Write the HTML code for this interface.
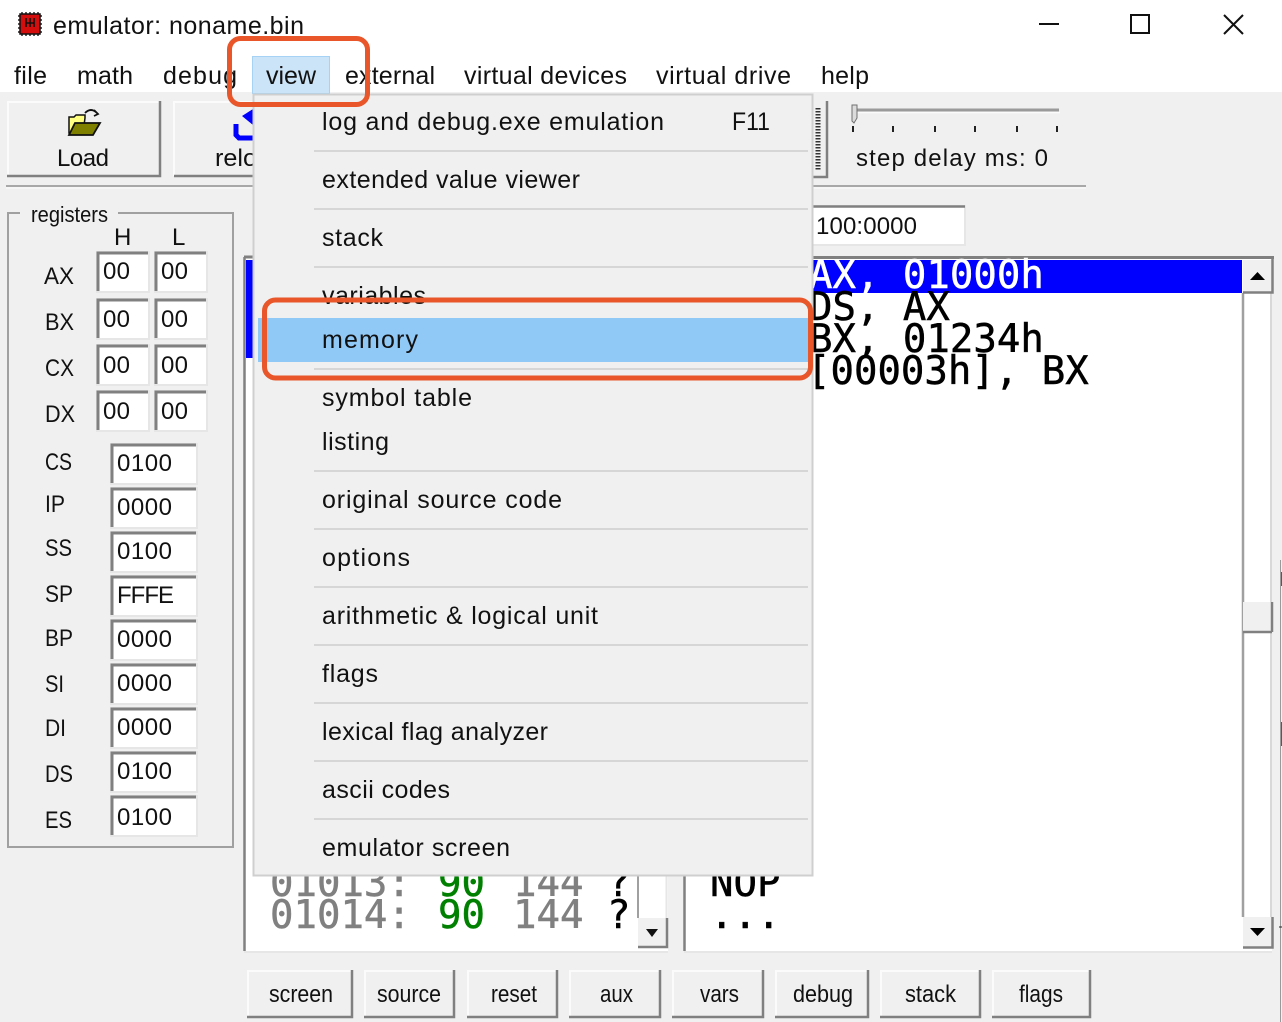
<!DOCTYPE html>
<html><head><meta charset="utf-8"><title>emulator: noname.bin</title>
<style>
html,body{margin:0;padding:0;background:#f0f0f0;width:1282px;height:1022px;overflow:hidden}
svg{display:block;position:absolute;left:0;top:0}
text{font-family:"Liberation Sans",sans-serif;fill:#111}
.m{font-size:25px}.s{font-size:24px}
.t{font-family:"DejaVu Sans Mono","Liberation Mono",monospace;font-size:39px;fill:#000;stroke:#000;stroke-width:.5}
.g{fill:#808080;stroke:#808080}.gr{fill:#008000;stroke:#008000}.w{fill:#fff;stroke:#fff}
.bt{fill:#f0f0f0}.hi{fill:none;stroke:#fbfbfb;stroke-width:2}.lo{fill:none;stroke:#808080;stroke-width:2.5}
.inp{fill:#fff;stroke:#e6e6e6;stroke-width:2}.ins{fill:none;stroke:#808080;stroke-width:3}
.sep{stroke:#d6d6d6;stroke-width:2}
</style></head><body>
<svg width="1282" height="1022" viewBox="0 0 1282 1022" xmlns="http://www.w3.org/2000/svg">
<rect width="1282" height="1022" fill="#f0f0f0"/>
<rect width="1282" height="92" fill="#fff"/>
<!-- title -->
<g>
<path d="M22 12v24M26 12v24M30 12v24M34 12v24M38 12v24M18 16h24M18 20h24M18 24h24M18 28h24M18 32h24" stroke="#222" stroke-width="1.5" stroke-dasharray="2 20"/>
<rect x="20" y="14" width="20" height="20" fill="#d40d0d" stroke="#111" stroke-width="1.5"/>
<path d="M26 18v9M30 18v9M34 18v9M26 23h8" stroke="#111" stroke-width="1.6" fill="none"/>
<text class="m" x="53" y="34" textLength="251" lengthAdjust="spacing">emulator: noname.bin</text>
<path d="M1039 24h20" stroke="#111" stroke-width="2"/>
<rect x="1131" y="15" width="18" height="18" fill="none" stroke="#111" stroke-width="2"/>
<path d="M1224 15l19 19M1243 15l-19 19" stroke="#111" stroke-width="2" fill="none"/>
</g>
<!-- menu bar -->
<rect x="252.500" y="56.500" width="77" height="37" fill="#cce4f7" stroke="#a6d3f5"/>
<g class="m">
<text class="m" x="14" y="84" textLength="33">file</text>
<text class="m" x="77" y="84" textLength="56">math</text>
<text class="m" x="163" y="84" textLength="74">debug</text>
<text class="m" x="266" y="84" textLength="50">view</text>
<text class="m" x="345" y="84" textLength="90">external</text>
<text class="m" x="464" y="84" textLength="163">virtual devices</text>
<text class="m" x="656" y="84" textLength="135">virtual drive</text>
<text class="m" x="821" y="84" textLength="48">help</text>
</g>
<!-- toolbar -->
<rect x="7" y="101" width="154" height="76" class="bt"/>
<path d="M8 176V102H160" class="hi"/><path d="M160 101V176H7" class="lo"/>
<g>
<path d="M69 133V117h5l2-2h9v3l-2 15z" fill="#ffff80" stroke="#111" stroke-width="1.5"/>
<path d="M69 135l6-12h25l-7 12z" fill="#808000" stroke="#111" stroke-width="1.8"/>
<path d="M85 113c4-4 8-4 12 0M94 110l4 4-4 2" fill="none" stroke="#111" stroke-width="1.8"/>
</g>
<text class="s" x="57" y="166" textLength="52">Load</text>
<rect x="173" y="101" width="150" height="76" class="bt"/>
<path d="M174 176V102H322" class="hi"/><path d="M174 176H322" class="lo"/>
<path d="M236 124v11l3 3h14" fill="none" stroke="#0000ff" stroke-width="5"/>
<path d="M242 116l11-7v16z" fill="#0000ff"/>
<text class="s" x="215" y="166" textLength="70" lengthAdjust="spacingAndGlyphs">reload</text>
<rect x="813" y="101" width="14" height="76" class="bt"/>
<path d="M818 108V170" stroke="#333" stroke-width="5" stroke-dasharray="1.500 1.500"/>
<path d="M827 101V177H813" class="lo"/>
<path d="M6 186H1086" stroke="#a8a8a8" stroke-width="2"/><path d="M6 188H1086" stroke="#fbfbfb" stroke-width="1"/>
<!-- slider -->
<path d="M855 110H1059" stroke="#9a9a9a" stroke-width="3"/><path d="M855 112.500H1060" stroke="#fbfbfb" stroke-width="1.500"/>
<path d="M852 105h5v13l-3 5-2-2z" fill="#dcdcdc" stroke="#707070" stroke-width="1"/>
<path d="M853 126v6M893 126v6M935 126v6M975 126v6M1017 126v6M1057 126v6" stroke="#222" stroke-width="2"/>
<text class="s" x="856" y="166" textLength="192">step delay ms: 0</text>
<!-- address -->
<rect x="700" y="206" width="265" height="39" class="inp"/>
<path d="M700 206.500H965" stroke="#808080" stroke-width="2.500"/>
<text class="s" x="816" y="234" textLength="101">100:0000</text>
<!-- registers group -->
<rect x="8" y="213" width="225" height="634" fill="none" stroke="#a0a0a0" stroke-width="2"/>
<rect x="20" y="205" width="98" height="16" fill="#f0f0f0"/>
<text x="31" y="222" textLength="77" lengthAdjust="spacingAndGlyphs" style="font-size:22px">registers</text>
<text class="s" x="114" y="245">H</text><text class="s" x="172" y="245">L</text>
<g class="s">
<text class="s" x="44" y="284" textLength="30" lengthAdjust="spacingAndGlyphs">AX</text>
<text class="s" x="45" y="330" textLength="29" lengthAdjust="spacingAndGlyphs">BX</text>
<text class="s" x="45" y="376" textLength="29" lengthAdjust="spacingAndGlyphs">CX</text>
<text class="s" x="45" y="422" textLength="30" lengthAdjust="spacingAndGlyphs">DX</text>
<text class="s" x="45" y="470" textLength="27" lengthAdjust="spacingAndGlyphs">CS</text>
<text class="s" x="45" y="512" textLength="20" lengthAdjust="spacingAndGlyphs">IP</text>
<text class="s" x="45" y="556" textLength="27" lengthAdjust="spacingAndGlyphs">SS</text>
<text class="s" x="45" y="602" textLength="28" lengthAdjust="spacingAndGlyphs">SP</text>
<text class="s" x="45" y="646" textLength="28" lengthAdjust="spacingAndGlyphs">BP</text>
<text class="s" x="45" y="692" textLength="19" lengthAdjust="spacingAndGlyphs">SI</text>
<text class="s" x="45" y="736" textLength="21" lengthAdjust="spacingAndGlyphs">DI</text>
<text class="s" x="45" y="782" textLength="28" lengthAdjust="spacingAndGlyphs">DS</text>
<text class="s" x="45" y="828" textLength="27" lengthAdjust="spacingAndGlyphs">ES</text>
</g>
<g>
<rect x="97" y="252" width="52" height="40" class="inp"/><path d="M98 291V253H148" class="ins"/><text class="s" x="103" y="279" textLength="27">00</text>
<rect x="155" y="252" width="52" height="40" class="inp"/><path d="M156 291V253H206" class="ins"/><text class="s" x="161" y="279" textLength="27">00</text>
<rect x="97" y="299" width="52" height="40" class="inp"/><path d="M98 338V300H148" class="ins"/><text class="s" x="103" y="327" textLength="27">00</text>
<rect x="155" y="299" width="52" height="40" class="inp"/><path d="M156 338V300H206" class="ins"/><text class="s" x="161" y="327" textLength="27">00</text>
<rect x="97" y="345" width="52" height="40" class="inp"/><path d="M98 384V346H148" class="ins"/><text class="s" x="103" y="373" textLength="27">00</text>
<rect x="155" y="345" width="52" height="40" class="inp"/><path d="M156 384V346H206" class="ins"/><text class="s" x="161" y="373" textLength="27">00</text>
<rect x="97" y="391" width="52" height="40" class="inp"/><path d="M98 430V392H148" class="ins"/><text class="s" x="103" y="419" textLength="27">00</text>
<rect x="155" y="391" width="52" height="40" class="inp"/><path d="M156 430V392H206" class="ins"/><text class="s" x="161" y="419" textLength="27">00</text>
</g>
<g>
<rect x="111" y="444" width="86" height="40" class="inp"/><path d="M112 483V445H196" class="ins"/><text class="s" x="117" y="471" textLength="55">0100</text>
<rect x="111" y="488" width="86" height="40" class="inp"/><path d="M112 527V489H196" class="ins"/><text class="s" x="117" y="515" textLength="55">0000</text>
<rect x="111" y="532" width="86" height="40" class="inp"/><path d="M112 571V533H196" class="ins"/><text class="s" x="117" y="559" textLength="55">0100</text>
<rect x="111" y="576" width="86" height="40" class="inp"/><path d="M112 615V577H196" class="ins"/><text class="s" x="117" y="603" textLength="57">FFFE</text>
<rect x="111" y="620" width="86" height="40" class="inp"/><path d="M112 659V621H196" class="ins"/><text class="s" x="117" y="647" textLength="55">0000</text>
<rect x="111" y="664" width="86" height="40" class="inp"/><path d="M112 703V665H196" class="ins"/><text class="s" x="117" y="691" textLength="55">0000</text>
<rect x="111" y="708" width="86" height="40" class="inp"/><path d="M112 747V709H196" class="ins"/><text class="s" x="117" y="735" textLength="55">0000</text>
<rect x="111" y="752" width="86" height="40" class="inp"/><path d="M112 791V753H196" class="ins"/><text class="s" x="117" y="779" textLength="55">0100</text>
<rect x="111" y="796" width="86" height="40" class="inp"/><path d="M112 835V797H196" class="ins"/><text class="s" x="117" y="825" textLength="55">0100</text>
</g>
<!-- left memory list -->
<rect x="245" y="258" width="423" height="694" fill="#fff"/>
<rect x="246" y="260" width="8" height="98" fill="#0000ff"/>
<path d="M244.500 257V951" stroke="#808080" stroke-width="2.500"/><path d="M244 257H668" stroke="#808080" stroke-width="3"/>
<path d="M244 952H668" stroke="#e6e6e6" stroke-width="2"/>
<text class="t g" x="270" y="896">01013:</text>
<text class="t gr" x="438" y="896">90</text>
<text class="t g" x="513" y="896">144</text>
<text class="t" x="607" y="896">?</text>
<text class="t g" x="270" y="928">01014:</text>
<text class="t gr" x="438" y="928">90</text>
<text class="t g" x="513" y="928">144</text>
<text class="t" x="607" y="928">?</text>
<rect x="638" y="876" width="29" height="72" fill="#fff"/>
<path d="M638 876V918" stroke="#a0a0a0" stroke-width="2"/><path d="M666.500 876V918" stroke="#e6e6e6" stroke-width="2"/>
<rect x="638" y="918" width="29" height="29" class="bt"/>
<path d="M638 947H667V918" class="lo"/>
<path d="M646 929h12l-6 8z" fill="#111"/>
<!-- code list -->
<rect x="684" y="258" width="588" height="694" fill="#fff"/>
<path d="M684.500 258V951" stroke="#808080" stroke-width="2.500"/>
<path d="M684 257.500H1274" stroke="#808080" stroke-width="3"/>
<path d="M684 952H1272" stroke="#e6e6e6" stroke-width="2"/>
<rect x="700" y="260" width="542" height="33" fill="#0000ff"/>
<text class="t w" x="809" y="288">AX, 01000h</text>
<text class="t" x="809" y="320">DS, AX</text>
<text class="t" x="809" y="352">BX, 01234h</text>
<text class="t" x="807" y="384">[00003h], BX</text>
<text class="t" x="710" y="896">NOP</text>
<text class="t" x="710" y="928">...</text>
<!-- code scrollbar -->
<path d="M1243 293V917" stroke="#a0a0a0" stroke-width="2.500"/><path d="M1271 293V917" stroke="#d8d8d8" stroke-width="2"/>
<rect x="1243" y="260" width="29" height="33" class="bt"/><path d="M1243 292.500H1272.500V259" class="lo"/>
<path d="M1250 280h15l-7.500-8z" fill="#000"/>
<rect x="1243" y="602" width="29" height="30" class="bt"/><path d="M1243 632H1272" class="lo"/><path d="M1272 602V632" class="lo"/>
<rect x="1243" y="917" width="29" height="30" class="bt"/><path d="M1243 947.500H1272.500V917" class="lo"/>
<path d="M1250 928h15l-7.500 8z" fill="#000"/>
<path d="M1280.500 560V1022" stroke="#9a9a9a" stroke-width="1"/>
<path d="M1281.500 572V586M1281.500 722V746" stroke="#3c6e3c" stroke-width="1"/>
<path d="M1279 927H1282" stroke="#222" stroke-width="1"/>
<!-- bottom buttons -->
<g>
<rect x="247" y="970" width="106" height="48" class="bt"/><path d="M248 1017V971H352" class="hi"/><path d="M352 970V1017H247" class="lo"/>
<rect x="364" y="970" width="91" height="48" class="bt"/><path d="M365 1017V971H454" class="hi"/><path d="M454 970V1017H364" class="lo"/>
<rect x="467" y="970" width="91" height="48" class="bt"/><path d="M468 1017V971H557" class="hi"/><path d="M557 970V1017H467" class="lo"/>
<rect x="569" y="970" width="92" height="48" class="bt"/><path d="M570 1017V971H660" class="hi"/><path d="M660 970V1017H569" class="lo"/>
<rect x="672" y="970" width="92" height="48" class="bt"/><path d="M673 1017V971H763" class="hi"/><path d="M763 970V1017H672" class="lo"/>
<rect x="775" y="970" width="94" height="48" class="bt"/><path d="M776 1017V971H868" class="hi"/><path d="M868 970V1017H775" class="lo"/>
<rect x="880" y="970" width="101" height="48" class="bt"/><path d="M881 1017V971H980" class="hi"/><path d="M980 970V1017H880" class="lo"/>
<rect x="992" y="970" width="99" height="48" class="bt"/><path d="M993 1017V971H1090" class="hi"/><path d="M1090 970V1017H992" class="lo"/>
<text class="s" x="269" y="1002" textLength="64" lengthAdjust="spacingAndGlyphs">screen</text>
<text class="s" x="377" y="1002" textLength="64" lengthAdjust="spacingAndGlyphs">source</text>
<text class="s" x="491" y="1002" textLength="46" lengthAdjust="spacingAndGlyphs">reset</text>
<text class="s" x="600" y="1002" textLength="33" lengthAdjust="spacingAndGlyphs">aux</text>
<text class="s" x="700" y="1002" textLength="39" lengthAdjust="spacingAndGlyphs">vars</text>
<text class="s" x="793" y="1002" textLength="60" lengthAdjust="spacingAndGlyphs">debug</text>
<text class="s" x="905" y="1002" textLength="51" lengthAdjust="spacingAndGlyphs">stack</text>
<text class="s" x="1019" y="1002" textLength="44" lengthAdjust="spacingAndGlyphs">flags</text>
</g>
<!-- dropdown -->
<rect x="253.500" y="94.500" width="559" height="781" fill="#f0f0f0" stroke="#cfcfcf" stroke-width="2"/>
<rect x="258" y="318" width="550" height="44" fill="#90c8f6"/>
<path d="M314 151H808M314 209H808M314 267H808M314 369H808M314 471H808M314 529H808M314 587H808M314 645H808M314 703H808M314 761H808M314 819H808" class="sep"/>
<g>
<text class="m" x="322" y="130" textLength="342">log and debug.exe emulation</text>
<text class="m" x="732" y="130" textLength="38" lengthAdjust="spacingAndGlyphs">F11</text>
<text class="m" x="322" y="188" textLength="258">extended value viewer</text>
<text class="m" x="322" y="246" textLength="61">stack</text>
<text class="m" x="322" y="304" textLength="104">variables</text>
<text class="m" x="322" y="348" textLength="96">memory</text>
<text class="m" x="322" y="406" textLength="150">symbol table</text>
<text class="m" x="322" y="450" textLength="67">listing</text>
<text class="m" x="322" y="508" textLength="240">original source code</text>
<text class="m" x="322" y="566" textLength="88">options</text>
<text class="m" x="322" y="624" textLength="276">arithmetic &amp; logical unit</text>
<text class="m" x="322" y="682" textLength="56">flags</text>
<text class="m" x="322" y="740" textLength="226">lexical flag analyzer</text>
<text class="m" x="322" y="798" textLength="128">ascii codes</text>
<text class="m" x="322" y="856" textLength="188">emulator screen</text>
</g>
<!-- annotations -->
<rect x="229.500" y="38.500" width="138" height="66" rx="11" fill="none" stroke="#e8562a" stroke-width="5"/>
<rect x="264.500" y="300" width="546" height="78" rx="11" fill="none" stroke="#e8562a" stroke-width="5"/>
</svg>
</body></html>
